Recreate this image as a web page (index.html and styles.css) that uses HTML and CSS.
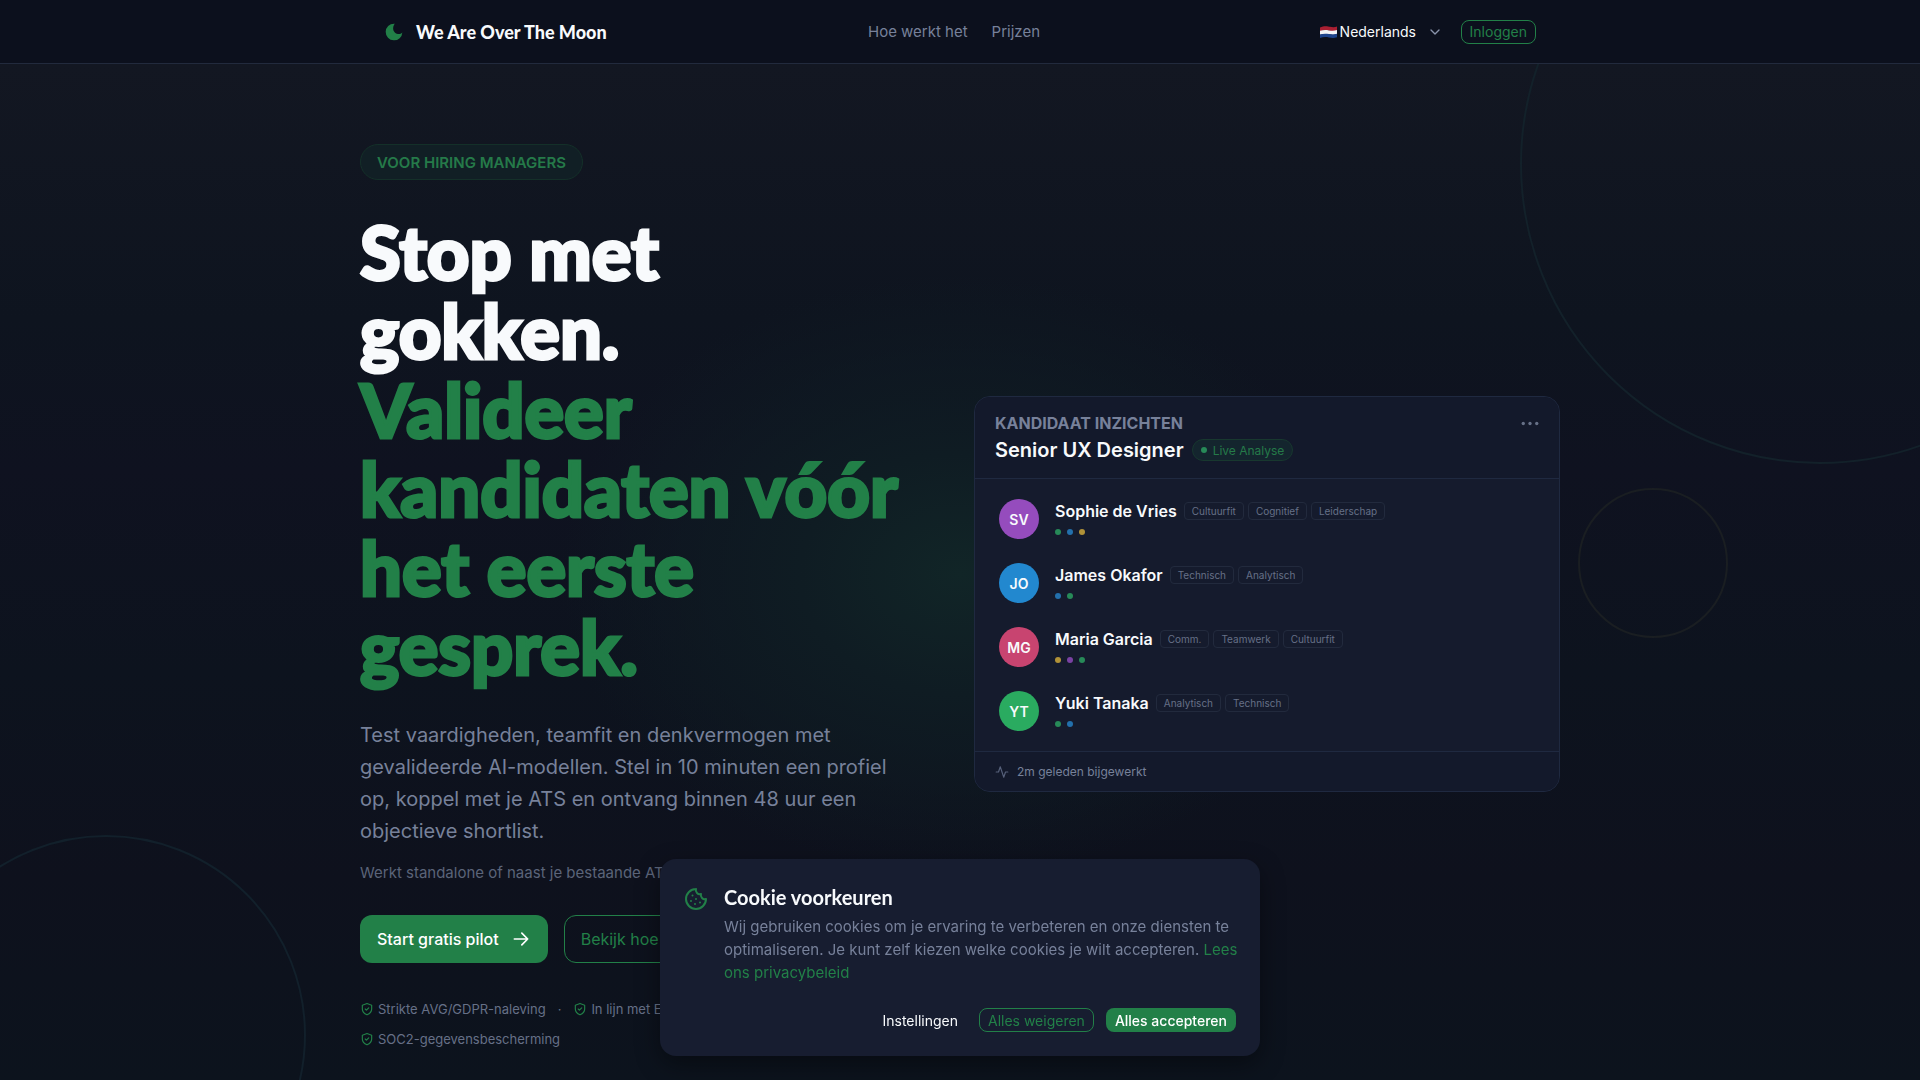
FILE: index.html
```html
<!DOCTYPE html>
<html lang="nl">
  <head>
    <meta charset="UTF-8" />
    <meta name="viewport" content="width=device-width, initial-scale=1.0" />
    <title>We Are Over The Moon</title>
    <link rel="stylesheet" href="styles.css">
  </head>
  <body>
    <header class="header">
      <div class="header-inner">
        <a class="brand" href="#">
          <svg class="brand-icon" viewBox="0 0 24 24" fill="currentColor">
            <path d="M12 2a10 10 0 1 0 10 10.500c-1.500 1.500-3.300 2-5.200 1.800-4-.4-6.500-4.300-5.700-8 .3-1.500.7-2.800 1.900-4.200z" />
          </svg>
          We Are Over The Moon
        </a>
        <nav class="nav">
          <a href="#hoe">Hoe werkt het</a>
          <a href="#prijzen">Prijzen</a>
        </nav>
        <div class="header-actions">
          <div class="language">
            <svg class="flag" viewBox="0 0 17 12">
              <path fill="#a91f32" d="M0 1.500C4 -.5 8 .3 10 .8s5 .7 7-.3V4.500c-3 1-5 .8-8 .2s-6-.4-9 .5z" />
              <path fill="#f4f4f6" d="M0 4.800c3-1 6-1 9-.4s5 .7 8-.3v4c-3 1-5 .8-8 .2s-6-.6-9 .4z" />
              <path fill="#1e448d" d="M0 8.500c3-1 6-1 9-.4s5 .7 8-.3v3.500c-3 1-5 .8-8 .2s-6-.6-9 .4z" />
            </svg>
            <select class="language-select" aria-label="Taal">
              <option>Nederlands</option>
              <option>English</option>
            </select>
            <svg class="chevron" viewBox="0 0 24 24"><path d="m6 9 6 6 6-6" /></svg>
          </div>
          <button class="btn btn-outline btn-small">Inloggen</button>
        </div>
      </div>
    </header>

    <main class="hero">
      <div class="glow"></div>
      <div class="circle circle-top"></div>
      <div class="circle circle-side"></div>
      <div class="circle circle-bottom"></div>

      <div class="hero-inner">
        <section class="intro">
          <span class="badge">VOOR HIRING MANAGERS</span>
          <h1 class="title">
            Stop met<br />gokken.<br />
            <span class="title-accent">Valideer<br />kandidaten vóór<br />het eerste<br />gesprek.</span>
          </h1>
          <p class="lead">
            Test vaardigheden, teamfit en denkvermogen met<br />
            gevalideerde AI-modellen. Stel in 10 minuten een profiel<br />
            op, koppel met je ATS en ontvang binnen 48 uur een<br />
            objectieve shortlist.
          </p>
          <p class="note">Werkt standalone of naast je bestaande ATS.</p>
          <div class="actions">
            <button class="btn btn-primary btn-large">
              Start gratis pilot
              <svg class="arrow" viewBox="0 0 24 24"><path d="M4 12h16M13 5l7 7-7 7" /></svg>
            </button>
            <button class="btn btn-outline btn-large">Bekijk hoe het werkt</button>
          </div>
          <ul class="trust">
            <li>
              <svg class="shield" viewBox="0 0 24 24"><path d="M12 2.500l8 3v6.500c0 5-3.500 8-8 10-4.500-2-8-5-8-10V5.500z" /><path d="m9 12 2 2 4-4" /></svg>
              Strikte AVG/GDPR-naleving
            </li>
            <li class="trust-dot">·</li>
            <li>
              <svg class="shield" viewBox="0 0 24 24"><path d="M12 2.500l8 3v6.500c0 5-3.500 8-8 10-4.500-2-8-5-8-10V5.500z" /><path d="m9 12 2 2 4-4" /></svg>
              In lijn met EU AI Act
            </li>
            <li class="trust-last">
              <svg class="shield" viewBox="0 0 24 24"><path d="M12 2.500l8 3v6.500c0 5-3.500 8-8 10-4.500-2-8-5-8-10V5.500z" /><path d="m9 12 2 2 4-4" /></svg>
              SOC2-gegevensbescherming
            </li>
          </ul>
        </section>

        <section class="card">
          <div class="card-header">
            <div class="card-top">
              <h2 class="card-label">KANDIDAAT INZICHTEN</h2>
              <button class="more" aria-label="Meer">
                <svg viewBox="0 0 16 4"><circle cx="2" cy="2" r="1.500" /><circle cx="8" cy="2" r="1.500" /><circle cx="14" cy="2" r="1.500" /></svg>
              </button>
            </div>
            <div class="card-role">
              <h3 class="card-title">Senior UX Designer</h3>
              <span class="live"><i class="dot green"></i>Live Analyse</span>
            </div>
          </div>
          <ul class="candidates">
            <li class="candidate">
              <span class="avatar avatar-purple">SV</span>
              <div>
                <div class="candidate-row">
                  <span class="candidate-name">Sophie de Vries</span>
                  <span class="tag">Cultuurfit</span><span class="tag">Cognitief</span><span class="tag">Leiderschap</span>
                </div>
                <div class="dots"><i class="dot green"></i><i class="dot blue"></i><i class="dot gold"></i></div>
              </div>
            </li>
            <li class="candidate">
              <span class="avatar avatar-blue">JO</span>
              <div>
                <div class="candidate-row">
                  <span class="candidate-name">James Okafor</span>
                  <span class="tag">Technisch</span><span class="tag">Analytisch</span>
                </div>
                <div class="dots"><i class="dot blue"></i><i class="dot green"></i></div>
              </div>
            </li>
            <li class="candidate">
              <span class="avatar avatar-pink">MG</span>
              <div>
                <div class="candidate-row">
                  <span class="candidate-name">Maria Garcia</span>
                  <span class="tag">Comm.</span><span class="tag">Teamwerk</span><span class="tag">Cultuurfit</span>
                </div>
                <div class="dots"><i class="dot gold"></i><i class="dot purple"></i><i class="dot green"></i></div>
              </div>
            </li>
            <li class="candidate">
              <span class="avatar avatar-green">YT</span>
              <div>
                <div class="candidate-row">
                  <span class="candidate-name">Yuki Tanaka</span>
                  <span class="tag">Analytisch</span><span class="tag">Technisch</span>
                </div>
                <div class="dots"><i class="dot green"></i><i class="dot blue"></i></div>
              </div>
            </li>
          </ul>
          <div class="card-footer">
            <svg class="pulse" viewBox="0 0 24 24"><path d="M22 12h-4l-3 9L9 3l-3 9H2" /></svg>
            2m geleden bijgewerkt
          </div>
        </section>
      </div>
    </main>

    <div class="cookie" role="dialog" aria-labelledby="cookie-title">
      <div class="cookie-body">
        <svg class="cookie-icon" viewBox="0 0 24 24">
          <path d="M12 2a10 10 0 1 0 10 10 4 4 0 0 1-5-5 4 4 0 0 1-5-5" />
          <path d="M8.500 8.500v.01M16 15.500v.01M12 12v.01M11 17v.01M7 14v.01" />
        </svg>
        <div>
          <h2 class="cookie-title" id="cookie-title">Cookie voorkeuren</h2>
          <p class="cookie-text">
            Wij gebruiken cookies om je ervaring te verbeteren en onze diensten te<br />
            optimaliseren. Je kunt zelf kiezen welke cookies je wilt accepteren.
            <a href="#privacy">Lees<br />ons privacybeleid</a>
          </p>
        </div>
      </div>
      <div class="cookie-actions">
        <button class="btn btn-ghost btn-small">Instellingen</button>
        <button class="btn btn-outline btn-small">Alles weigeren</button>
        <button class="btn btn-primary btn-small">Alles accepteren</button>
      </div>
    </div>
  </body>
</html>
```
FILE: styles.css
```css
* {
  box-sizing: border-box;
  margin: 0;
  padding: 0;
}

body {
  font-family: Inter, "Liberation Sans", sans-serif;
  background-color: #0d131e;
  color: #f8fafc;
}

a {
  color: inherit;
  text-decoration: none;
}

ul {
  list-style: none;
}

button,
select {
  font: inherit;
  color: inherit;
  background: none;
  border: 0;
  cursor: pointer;
}

svg {
  fill: none;
  stroke: currentColor;
  stroke-width: 2;
  stroke-linecap: round;
  stroke-linejoin: round;
  flex-shrink: 0;
}

/* Header */
.header {
  position: relative;
  z-index: 2;
  height: 64px;
  background-color: #0c101d;
  border-bottom: 1px solid #222a3d;
}

.header-inner {
  display: grid;
  grid-template-columns: 1fr auto 1fr;
  align-items: center;
  max-width: 1200px;
  height: 100%;
  margin: 0 auto;
  padding: 0 24px;
}

.brand {
  display: flex;
  align-items: center;
  gap: 12px;
  font-family: Lato, sans-serif;
  font-size: 18px;
  font-weight: 900;
}

.brand-icon {
  width: 20px;
  height: 20px;
  color: #228048;
  fill: currentColor;
  stroke: none;
}

.nav {
  display: flex;
  gap: 24px;
  padding-right: 12px;
  font-size: 15px;
  color: #77819a;
}

.header-actions {
  display: flex;
  justify-content: flex-end;
  align-items: center;
  gap: 18px;
}

.language {
  display: flex;
  align-items: center;
  gap: 3px;
  font-size: 14px;
}

.flag {
  width: 17px;
  height: 12px;
  stroke: none;
}

.language-select {
  appearance: none;
  width: 84px;
}

.chevron {
  width: 16px;
  height: 16px;
  color: #8a94ab;
}

/* Buttons */
.btn {
  display: flex;
  align-items: center;
  justify-content: center;
  border: 1px solid transparent;
  white-space: nowrap;
}

.btn-small {
  height: 24px;
  padding: 0 8px;
  border-radius: 8px;
  font-size: 14px;
}

.btn-large {
  height: 48px;
  gap: 12px;
  padding: 0 16px;
  border-radius: 12px;
  font-size: 16px;
}

.btn-primary {
  background-color: #228048;
  color: #fff;
  font-weight: 500;
}

.btn-outline {
  border-color: #228048;
  color: #228048;
}

/* Hero */
.hero {
  position: relative;
  min-height: calc(100vh - 64px);
  overflow: hidden;
  background: linear-gradient(#131722, #0e141f 25%, #0f1220 40%, #0d131e 60%, #0e111d 80%, #0c131d);
}

.glow {
  position: absolute;
  top: 210px;
  left: 50%;
  width: 800px;
  height: 600px;
  margin-left: -400px;
  background: radial-gradient(closest-side, #112527, #0f1c23 40%, transparent);
}

.circle {
  position: absolute;
  border: 2px solid #13212a;
  border-radius: 50%;
}

.circle-top {
  top: -200px;
  right: -200px;
  width: 600px;
  height: 600px;
}

.circle-side {
  top: 424px;
  right: 10%;
  width: 150px;
  height: 150px;
  border-color: #1a1e22;
}

.circle-bottom {
  left: -94px;
  bottom: -155px;
  width: 400px;
  height: 400px;
  border-color: #12202b;
}

.hero-inner {
  position: relative;
  display: grid;
  grid-template-columns: 1fr 586px;
  gap: 48px;
  align-items: start;
  max-width: 1200px;
  margin: 0 auto;
  padding-top: 80px;
}

.badge {
  display: inline-flex;
  align-items: center;
  height: 36px;
  padding: 0 16px;
  border: 1px solid #143029;
  border-radius: 18px;
  background-color: #111f25;
  color: #257a49;
  font-size: 15px;
  font-weight: 600;
}

.title {
  margin-top: 32px;
  font-family: Lato, sans-serif;
  font-size: 74px;
  font-weight: 900;
  line-height: 79px;
  white-space: nowrap;
  -webkit-text-stroke: 3px currentColor;
}

.title-accent {
  color: #228048;
}

.lead {
  margin-top: 33px;
  font-size: 20px;
  line-height: 32px;
  color: #77819a;
  white-space: nowrap;
}

.note {
  margin-top: 14px;
  font-size: 15px;
  line-height: 24px;
  color: #5b6479;
}

.actions {
  display: flex;
  gap: 16px;
  margin-top: 30px;
}

.arrow {
  width: 20px;
  height: 20px;
}

.trust {
  display: flex;
  flex-wrap: wrap;
  gap: 10px 12px;
  margin-top: 36px;
  font-size: 13px;
  line-height: 20px;
  color: #667087;
}

.trust li {
  display: flex;
  align-items: center;
  gap: 4px;
}

.trust .trust-last {
  flex-basis: 100%;
}

.shield {
  width: 14px;
  height: 14px;
  color: #228048;
}

/* Candidate card */
.card {
  margin-top: 252px;
  border: 1px solid #1f2940;
  border-radius: 16px;
  background-color: #151b2d;
  overflow: hidden;
}

.card-header {
  padding: 16px 20px;
  border-bottom: 1px solid #1f2940;
  background-color: #13192b;
}

.card-top,
.card-role,
.candidate,
.candidate-row,
.dots,
.card-footer {
  display: flex;
  align-items: center;
}

.card-top {
  justify-content: space-between;
}

.card-label {
  font-size: 16px;
  font-weight: 700;
  line-height: 20px;
  color: #77819a;
}

.more {
  display: flex;
  color: #667087;
}

.more svg {
  width: 18px;
  height: 5px;
  fill: currentColor;
  stroke: none;
}

.card-role {
  gap: 8px;
  margin-top: 5px;
}

.card-title {
  font-size: 20px;
  font-weight: 600;
  line-height: 24px;
}

.live {
  display: flex;
  align-items: center;
  gap: 6px;
  height: 22px;
  padding: 0 8px;
  border: 1px solid #18382f;
  border-radius: 11px;
  background-color: #14252e;
  color: #257a49;
  font-size: 12px;
}

.candidates {
  padding: 8px 24px;
}

.candidate {
  gap: 16px;
  height: 64px;
}

.avatar {
  display: flex;
  align-items: center;
  justify-content: center;
  width: 40px;
  height: 40px;
  border-radius: 50%;
  font-size: 14px;
  font-weight: 600;
}

.avatar-purple {
  background-color: #954cbd;
}

.avatar-blue {
  background-color: #2288cf;
}

.avatar-pink {
  background-color: #c84470;
}

.avatar-green {
  background-color: #2aab60;
}

.candidate-row {
  gap: 4px;
}

.candidate-name {
  margin-right: 3px;
  font-size: 16px;
  font-weight: 600;
  line-height: 26px;
}

.tag {
  padding: 0 7px;
  border: 1px solid #222a3d;
  border-radius: 4px;
  font-size: 10px;
  line-height: 16px;
  color: #667087;
}

.dots {
  gap: 6px;
  height: 16px;
}

.dot {
  width: 6px;
  height: 6px;
  border-radius: 50%;
}

.green {
  background-color: #278a58;
}

.blue {
  background-color: #2370ac;
}

.gold {
  background-color: #b09238;
}

.purple {
  background-color: #7a42a3;
}

.card-footer {
  gap: 8px;
  height: 40px;
  padding: 0 20px;
  border-top: 1px solid #1f2940;
  background-color: #13192b;
  color: #77819a;
  font-size: 12px;
}

.pulse {
  width: 14px;
  height: 14px;
  color: #56607a;
}

/* Cookie banner */
.cookie {
  position: fixed;
  left: 50%;
  bottom: 24px;
  z-index: 3;
  width: 600px;
  max-width: 100%;
  padding: 24px;
  transform: translateX(-50%);
  border-radius: 16px;
  background-color: #171d30;
  box-shadow: 0 8px 24px rgba(0, 0, 0, 0.4);
}

.cookie-body {
  display: flex;
  gap: 16px;
}

.cookie-icon {
  width: 24px;
  height: 24px;
  margin-top: 4px;
  color: #228048;
}

.cookie-title {
  font-family: Lato, sans-serif;
  font-size: 20px;
  font-weight: 700;
  line-height: 28px;
}

.cookie-text {
  margin-top: 4px;
  font-size: 15px;
  line-height: 23px;
  color: #77819a;
  white-space: nowrap;
}

.cookie-text a {
  color: #228048;
}

.cookie-actions {
  display: flex;
  justify-content: flex-end;
  gap: 12px;
  margin-top: 24px;
}
```
